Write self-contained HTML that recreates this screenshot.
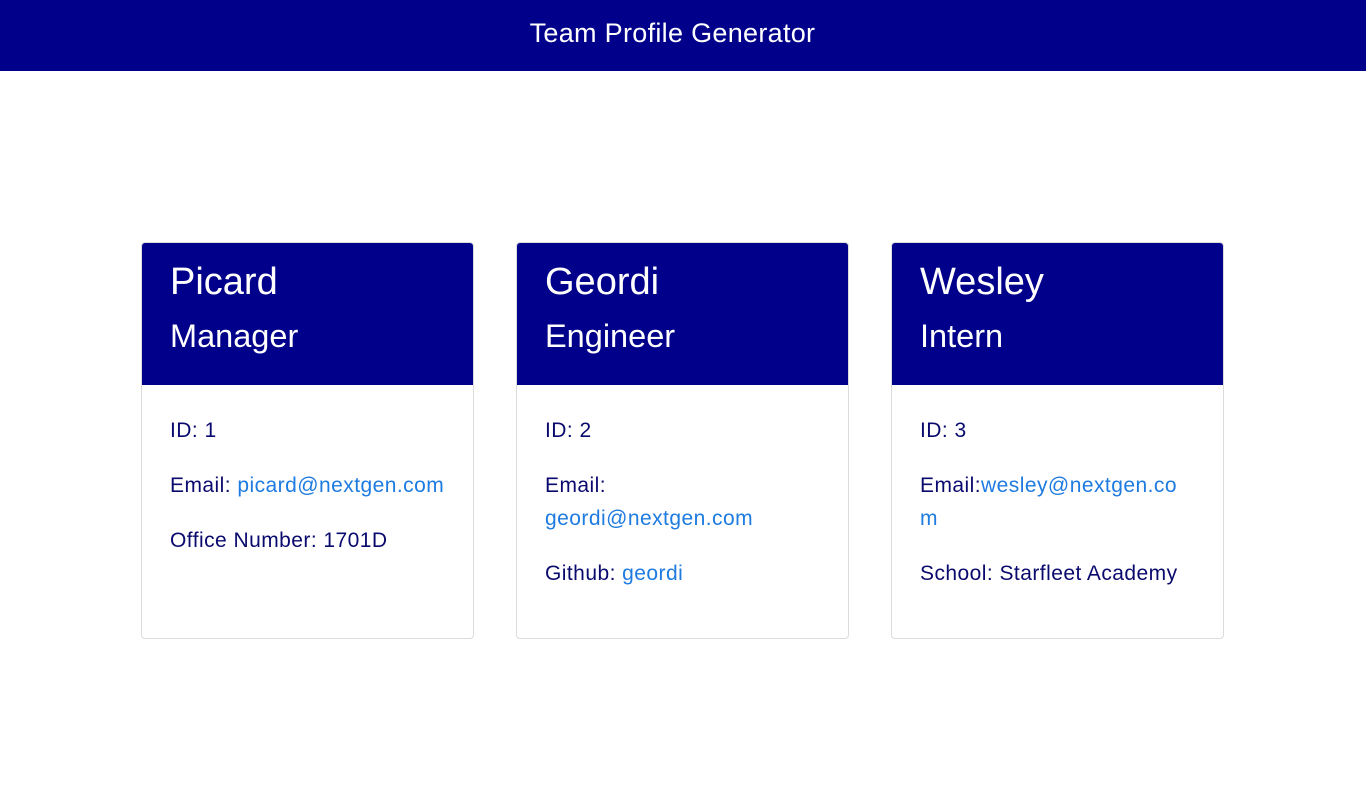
<!DOCTYPE html>
<html><head><meta charset="utf-8"><style>
*{margin:0;padding:0;box-sizing:border-box}
body{width:1366px;height:809px;background:#fff;font-family:"Liberation Sans",Arial,sans-serif;position:relative;overflow:hidden}
.top{position:absolute;left:0;top:0;width:1366px;height:71px;background:#00008b;color:#fff;font-size:27px;letter-spacing:0.3px;text-align:center;line-height:66px;padding-right:21px}
.card{position:absolute;top:242px;width:333px;height:397px;border:1px solid #dcdcdc;border-radius:4px;overflow:hidden;background:#fff}
.hd{height:142px;background:#00008b;color:#fff;position:relative}
.nm{position:absolute;left:28px;top:18px;font-size:38px;line-height:42px}
.rl{position:absolute;left:28px;top:74px;font-size:32.5px;line-height:38px}
.bd{padding:29px 28px 0 28px;color:#0a0a6e;font-size:21px;letter-spacing:0.45px;line-height:33px}
.bd p{margin-bottom:22px}
a{color:#1e7be0;text-decoration:none}
</style></head><body>
<div class="top">Team Profile Generator</div>
<div class="card" style="left:141px"><div class="hd"><div class="nm">Picard</div><div class="rl">Manager</div></div>
<div class="bd"><p>ID: 1</p><p>Email: <a>picard@nextgen.com</a></p><p>Office Number: 1701D</p></div></div>
<div class="card" style="left:516px"><div class="hd"><div class="nm">Geordi</div><div class="rl">Engineer</div></div>
<div class="bd"><p>ID: 2</p><p>Email:<br><a>geordi@nextgen.com</a></p><p>Github: <a>geordi</a></p></div></div>
<div class="card" style="left:891px"><div class="hd"><div class="nm">Wesley</div><div class="rl">Intern</div></div>
<div class="bd"><p>ID: 3</p><p>Email:<a>wesley@nextgen.co<br>m</a></p><p>School: Starfleet Academy</p></div></div>
</body></html>
